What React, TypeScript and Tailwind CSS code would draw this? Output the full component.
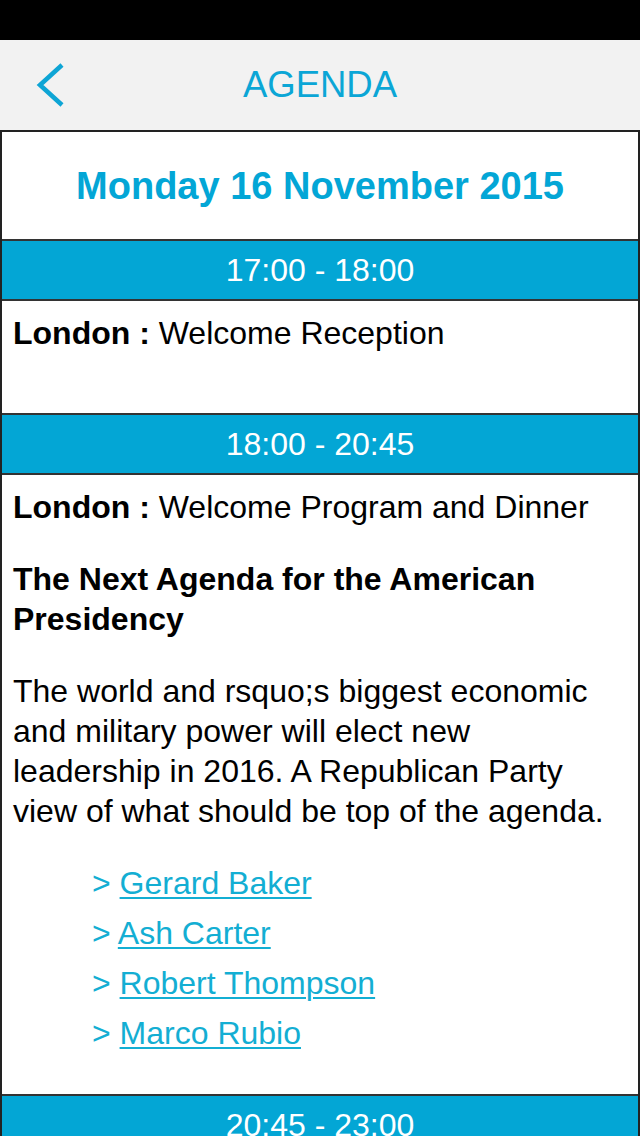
import React from 'react'

const speakers = ["Gerard Baker", "Ash Carter", "Robert Thompson", "Marco Rubio"];

function TimeBar({ label }: { label: string }) {
  return (
    <div className="h-[62px] bg-[#03a6d5] border-y-2 border-[#333333] flex items-center justify-center text-white text-[32px] leading-none">
      {label}
    </div>
  );
}

export default function App() {
  return (
    <div className="w-[640px] h-[1136px] overflow-hidden bg-white" style={{ fontFamily: '"Liberation Sans", Arial, sans-serif' }}>
      {/* Status bar */}
      <div className="h-[40px] bg-black" />

      {/* Header */}
      <div className="h-[90px] bg-[#f2f2f2] relative flex items-center justify-center">
        <svg className="absolute left-[34px] top-[22px]" width="32" height="46" viewBox="0 0 32 46">
          <path d="M28 3 L6 23 L28 43" fill="none" stroke="#0ea5d5" strokeWidth="4.5" />
        </svg>
        <span className="text-[36.5px] text-[#0ba6d6] leading-none">AGENDA</span>
      </div>

      {/* Agenda box */}
      <div className="border-2 border-[#222222] border-b-0">
        <div className="h-[107px] flex items-center justify-center">
          <h1 className="text-[38px] font-bold text-[#03a6d6] leading-none">Monday 16 November 2015</h1>
        </div>

        <TimeBar label="17:00 - 18:00" />
        <div className="h-[112px] px-[11px] pt-[12px] text-[32px] leading-[40px] text-black">
          <span className="font-bold">London :</span> Welcome Reception
        </div>

        <TimeBar label="18:00 - 20:45" />
        <div className="pl-[11px] pr-[20px] pt-[12px] pb-[41px] text-[32px] leading-[40px] text-black">
          <p><span className="font-bold">London :</span> Welcome Program and Dinner</p>
          <p className="font-bold mt-[32px]">The Next Agenda for the American Presidency</p>
          <p className="mt-[32px]">The world and rsquo;s biggest economic and military power will elect new leadership in 2016. A Republican Party view of what should be top of the agenda.</p>
          <ul className="mt-[32px] pl-[79px] flex flex-col gap-[10px]">
            {speakers.map((name) => (
              <li key={name} className="text-[#13aed3]">
                &gt; <a href="#" className="underline underline-offset-[3px] decoration-2">{name}</a>
              </li>
            ))}
          </ul>
        </div>

        <TimeBar label="20:45 - 23:00" />
      </div>
    </div>
  )
}
